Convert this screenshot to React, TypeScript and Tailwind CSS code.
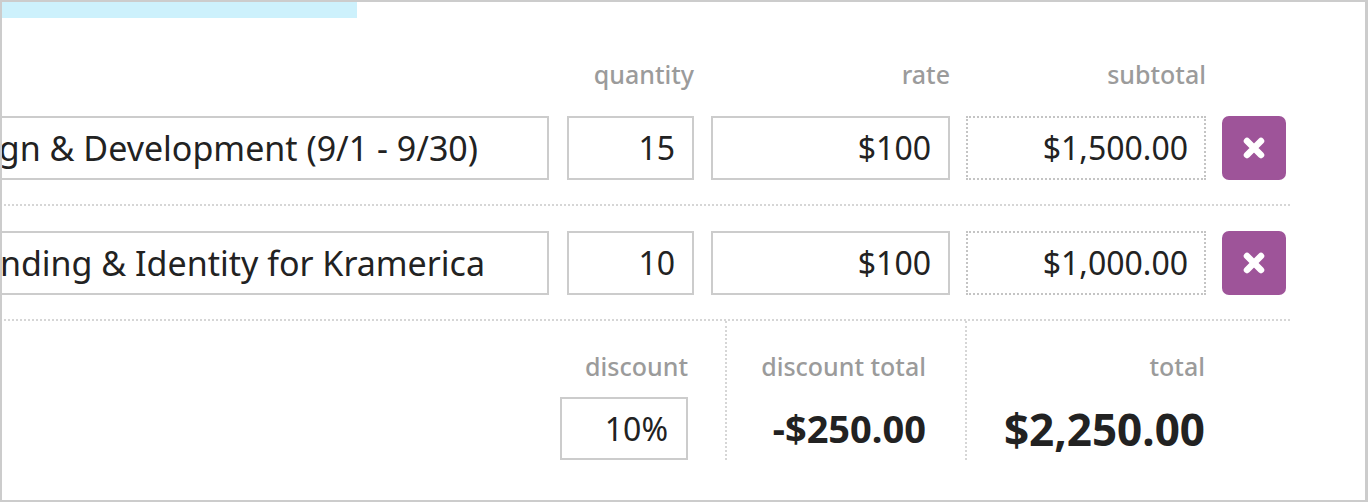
import React from 'react';

const items = [
  { id: 1, description: 'Website Design & Development (9/1 - 9/30)', quantity: '15', rate: '$100', subtotal: '$1,500.00', textPad: 'pr-[69px]' },
  { id: 2, description: 'Logo Branding & Identity for Kramerica', quantity: '10', rate: '$100', subtotal: '$1,000.00', textPad: 'pr-[62px]' },
];

const font = { fontFamily: '"Noto Sans", "Open Sans", sans-serif' };

function RemoveButton() {
  return (
    <button className="w-[64px] h-[64px] rounded-[7px] bg-[#9e5499] flex items-center justify-center">
      <svg width="24" height="24" viewBox="0 0 24 24">
        <path d="M5 5 L19 19 M19 5 L5 19" stroke="#fff" strokeWidth="6.5" strokeLinecap="round" />
      </svg>
    </button>
  );
}

export default function App() {
  return (
    <div
      className="w-[1368px] h-[502px] overflow-hidden bg-white border-t-2 border-l-2 border-b-2 border-r-[3px] border-[#cccccc]"
      style={font}
    >
      <div className="w-[355px] h-[16px] bg-[#cdf1fc]" />

      <div className="ml-[-202px] w-[1490px]">
        {/* column headers */}
        <div className="flex h-[73px] items-end pb-[2px] text-[25px] leading-[30px] font-medium text-[#9b9b9b]">
          <div className="w-[749px]" />
          <div className="ml-[18px] w-[127px] text-right">quantity</div>
          <div className="ml-[17px] w-[239px] text-right">rate</div>
          <div className="ml-[16px] w-[240px] text-right">subtotal</div>
        </div>

        {/* line items */}
        {items.map((item) => (
          <div
            key={item.id}
            className="flex items-center pt-[25px] pb-[24px] border-b-2 border-dotted border-[#d6d6d6] text-[#222]"
          >
            <div
              className={`w-[749px] h-[64px] border-2 border-[#cccccc] flex items-center justify-end overflow-hidden whitespace-nowrap text-[34px] ${item.textPad}`}
            >
              {item.description}
            </div>
            <div className="ml-[18px] w-[127px] h-[64px] border-2 border-[#cccccc] flex items-center justify-end pr-[17px] text-[32px]">
              {item.quantity}
            </div>
            <div className="ml-[17px] w-[239px] h-[64px] border-2 border-[#cccccc] flex items-center justify-end pr-[17px] text-[32px]">
              {item.rate}
            </div>
            <div className="ml-[16px] w-[240px] h-[64px] border-2 border-dotted border-[#c4c4c4] flex items-center justify-end pr-[16px] text-[32px]">
              {item.subtotal}
            </div>
            <div className="ml-[16px]">
              <RemoveButton />
            </div>
          </div>
        ))}

        {/* totals */}
        <div className="flex justify-end text-[#222]">
          <div className="w-[240px] pr-[37px] pt-[30px] flex flex-col items-end">
            <div className="text-[25px] leading-[30px] font-medium text-[#9b9b9b]">discount</div>
            <div className="mt-[16px] w-[128px] h-[63px] border-2 border-[#cccccc] flex items-center justify-end pr-[18px] text-[32px]">
              10%
            </div>
          </div>
          <div className="w-[240px] pr-[39px] pt-[30px] border-l-2 border-dotted border-[#d6d6d6] flex flex-col items-end">
            <div className="text-[25px] leading-[30px] font-medium text-[#9b9b9b]">discount total</div>
            <div className="mt-[16px] h-[63px] flex items-center text-[38px] font-bold">-$250.00</div>
          </div>
          <div className="w-[325px] pr-[85px] pt-[30px] border-l-2 border-dotted border-[#d6d6d6] flex flex-col items-end">
            <div className="text-[25px] leading-[30px] font-medium text-[#9b9b9b]">total</div>
            <div className="mt-[16px] h-[63px] flex items-center text-[44px] font-bold">$2,250.00</div>
          </div>
        </div>
      </div>
    </div>
  );
}
